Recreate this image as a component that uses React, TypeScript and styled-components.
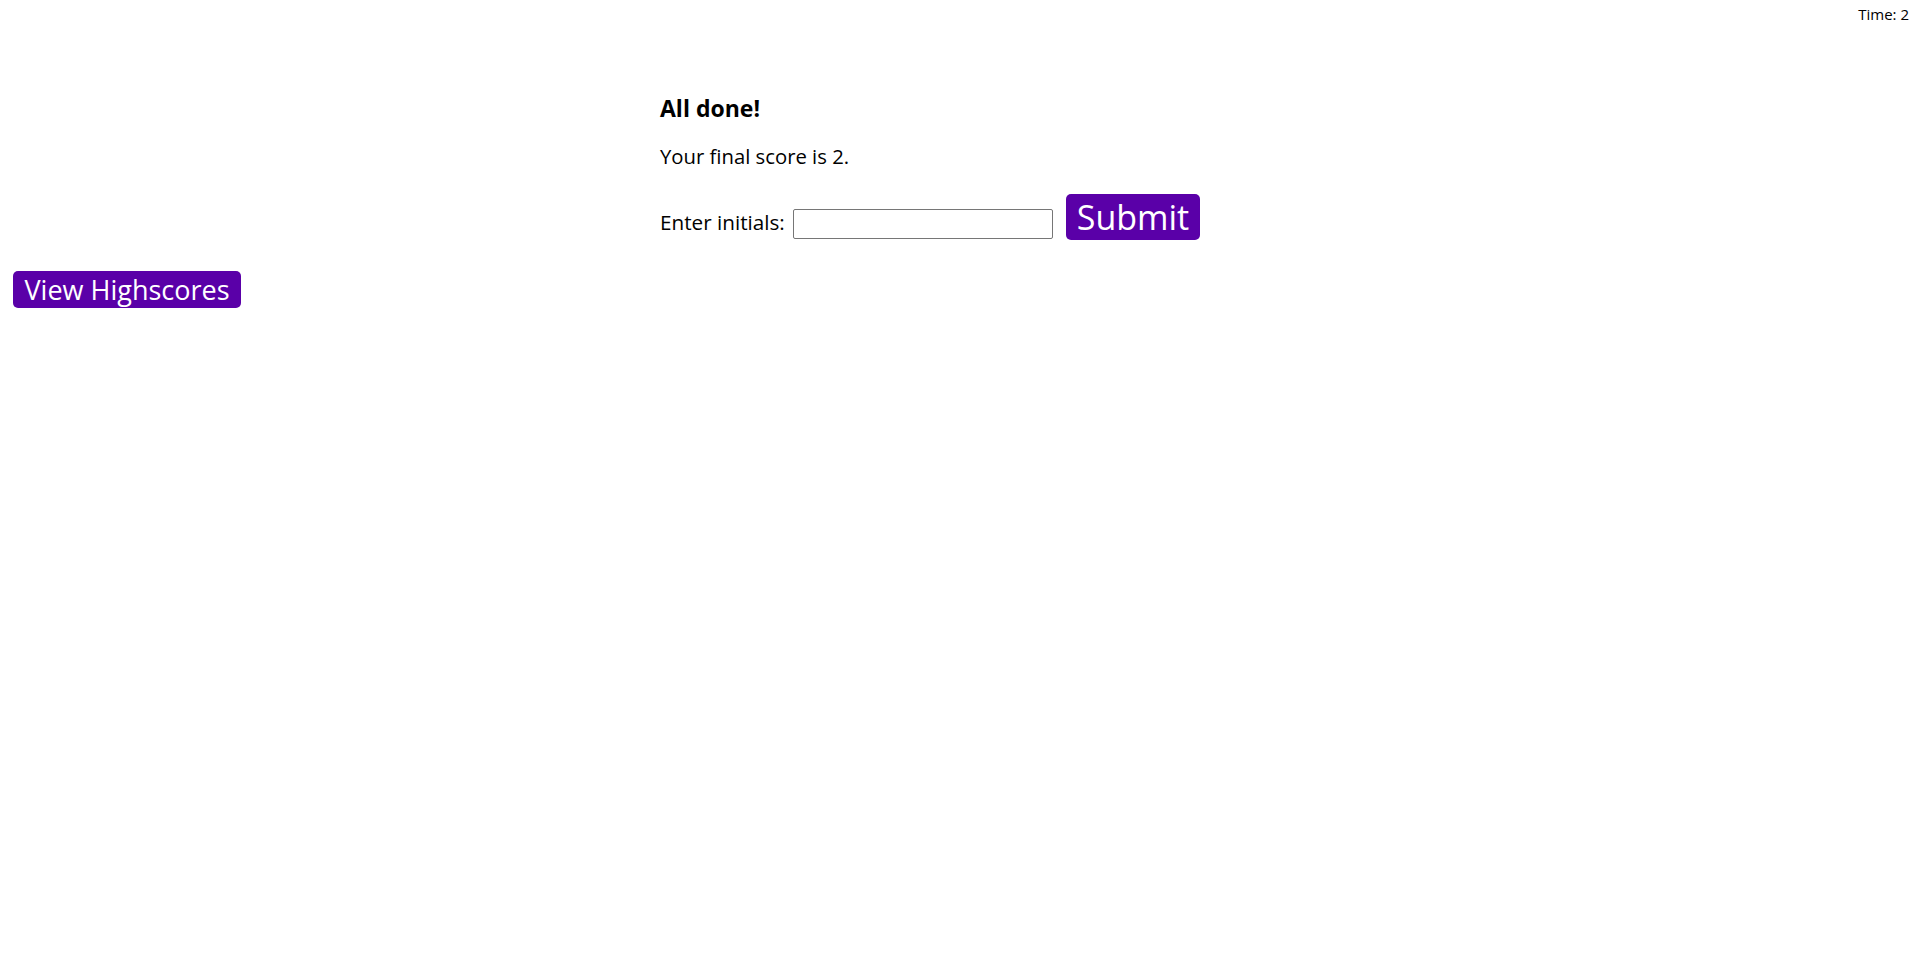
import React from "react";
import styled, { createGlobalStyle } from "styled-components";

const GlobalStyle = createGlobalStyle`
  body {
    margin: 0;
    font-family: "Trebuchet MS", "Open Sans", "Noto Sans", sans-serif;
    color: #000;
    background: #fff;
  }
`;

const PURPLE = "#5a00a8";

const Header = styled.header`
  display: flex;
  justify-content: flex-end;
  padding: 4px 11px 0 0;
`;

const Timer = styled.span`
  font-size: 15px;
  line-height: 20px;
`;

const Main = styled.main`
  width: 600px;
  margin: 70px auto 0;
`;

const Title = styled.h2`
  font-size: 23px;
  font-weight: bold;
  line-height: 28px;
  margin: 0;
`;

const Text = styled.p`
  font-size: 20.3px;
  line-height: 24px;
  margin: 22px 0 0;
`;

const FormRow = styled.form`
  display: flex;
  align-items: flex-end;
  margin-top: 26px;
`;

const Label = styled.label`
  font-size: 20.7px;
  line-height: 24px;
  margin-bottom: 6px;
`;

const Input = styled.input`
  width: 260px;
  height: 30px;
  box-sizing: border-box;
  border: 1px solid #767676;
  border-radius: 2px;
  margin: 0 13px 1px 8px;
  font-size: 16px;
  padding: 2px 4px;
`;

const PurpleButton = styled.button<{ $size: number; $h: number; $pad: number }>`
  background: ${PURPLE};
  color: #fff;
  border: none;
  border-radius: 5px;
  font-family: inherit;
  font-size: ${(p) => p.$size}px;
  height: ${(p) => p.$h}px;
  line-height: ${(p) => p.$h}px;
  padding: 0 ${(p) => p.$pad}px;
  cursor: pointer;
`;

const HighscoreWrap = styled.div`
  margin: 31px 0 0 13px;
`;

export default function App() {
  return (
    <>
      <GlobalStyle />
      <Header>
        <Timer>Time: 2</Timer>
      </Header>
      <Main>
        <Title>All done!</Title>
        <Text>Your final score is 2.</Text>
        <FormRow onSubmit={(e) => e.preventDefault()}>
          <Label htmlFor="initials">Enter initials:</Label>
          <Input id="initials" type="text" />
          <PurpleButton $size={34} $h={46} $pad={11} type="submit">
            Submit
          </PurpleButton>
        </FormRow>
      </Main>
      <HighscoreWrap>
        <PurpleButton $size={27} $h={37} $pad={11.5}>
          View Highscores
        </PurpleButton>
      </HighscoreWrap>
    </>
  );
}
